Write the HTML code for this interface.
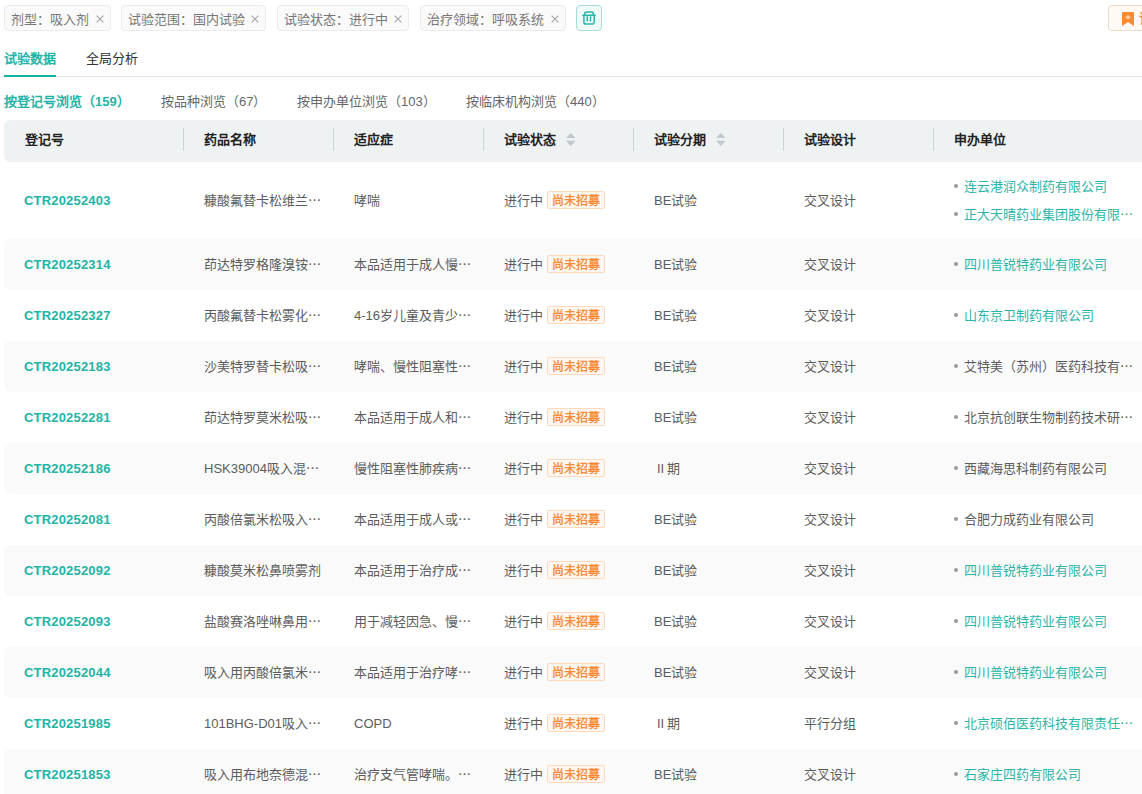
<!DOCTYPE html><html lang="zh-CN"><head><meta charset="utf-8"><style>
*{box-sizing:border-box;margin:0;padding:0}
html,body{width:1142px;height:794px;overflow:hidden;background:#fff}
body{position:relative;font-family:"Liberation Sans",sans-serif;font-size:13px;color:#5c5c5c}
.a{position:absolute;white-space:nowrap}
.tag{position:absolute;white-space:nowrap;top:5px;height:26px;border:1px solid #ebebeb;background:#fafafa;border-radius:4px;color:#777;font-size:13px;line-height:27px;padding-left:6px}
.tag .x{position:absolute}
.trash{position:absolute;left:576px;top:5px;width:26px;height:26px;border:1px solid #a6ddd5;background:#f0faf8;border-radius:4px}
.sub{position:absolute;white-space:nowrap;top:93px;line-height:18px;font-size:13px;color:#666}
.hdr{position:absolute;left:4px;top:120px;width:1160px;height:42px;background:#eef2f3;border-radius:6px 0 0 6px}
.th{position:absolute;white-space:nowrap;top:131px;line-height:18px;font-weight:bold;color:#222;font-size:13px}
.sep{position:absolute;top:128px;width:1px;height:23px;background:#cdd4d7}
.row{position:absolute;left:4px;width:1160px;border-radius:6px 0 0 6px}
.row.g{background:#fafafa}
.td{position:absolute;white-space:nowrap;line-height:18px;font-size:13px;color:#5c5c5c}
.id{font-weight:bold;color:#22b4a5;letter-spacing:0.18px}
.st{position:absolute;white-space:nowrap;font-size:12px;line-height:19px;height:17.5px;overflow:hidden;-webkit-text-stroke:0.3px #f6862a;border:1px solid #ffd9bd;background:#fff8f2;color:#f6862a;padding:0 4px;border-radius:2px}
.dot{position:absolute;width:4px;height:4px;border-radius:2px;background:#9a9a9a}
.teal{color:#2cb5a8}
</style></head><body>
<div class="tag" style="left:4px;width:107px">剂型：吸入剂<svg class="x" width="8" height="8" viewBox="0 0 8 8" style="right:6px;top:9px"><path d="M0.6 0.6L7.4 7.4M7.4 0.6L0.6 7.4" stroke="#a6a6a6" stroke-width="1.1"/></svg></div>
<div class="tag" style="left:121px;width:145px">试验范围：国内试验<svg class="x" width="8" height="8" viewBox="0 0 8 8" style="right:6px;top:9px"><path d="M0.6 0.6L7.4 7.4M7.4 0.6L0.6 7.4" stroke="#a6a6a6" stroke-width="1.1"/></svg></div>
<div class="tag" style="left:277px;width:132px">试验状态：进行中<svg class="x" width="8" height="8" viewBox="0 0 8 8" style="right:6px;top:9px"><path d="M0.6 0.6L7.4 7.4M7.4 0.6L0.6 7.4" stroke="#a6a6a6" stroke-width="1.1"/></svg></div>
<div class="tag" style="left:420px;width:146px">治疗领域：呼吸系统<svg class="x" width="8" height="8" viewBox="0 0 8 8" style="right:6px;top:9px"><path d="M0.6 0.6L7.4 7.4M7.4 0.6L0.6 7.4" stroke="#a6a6a6" stroke-width="1.1"/></svg></div>
<div class="trash"><svg width="26" height="26" viewBox="0 0 26 26" style="position:absolute;left:-1px;top:-1px" fill="none" stroke="#2bb5a7" stroke-width="1.5" stroke-linecap="round" stroke-linejoin="round"><path d="M6.9 10.3H19.1"/><path d="M8.7 10.3V8.9a1.8 1.8 0 0 1 1.8-1.8h5.1a1.8 1.8 0 0 1 1.8 1.8V10.3"/><path d="M7.9 10.6V17a2.1 2.1 0 0 0 2.1 2.1h6.1a2.1 2.1 0 0 0 2.1-2.1V10.6"/><path d="M11.3 11.8V16M14.5 11.8V16"/></svg></div>
<div class="a" style="left:1108px;top:5px;width:80px;height:26px;border:1px solid #efd9c9;background:#fffaf5;border-radius:4px"></div>
<svg class="a" style="left:1122px;top:12px" width="12" height="14" viewBox="0 0 12 14"><path d="M0 1.2Q0 0 1.2 0H10.8Q12 0 12 1.2V14L6 10L0 14Z" fill="#f98a2f"/><path d="M3.6 5.2H8.4M6 3V7.6" stroke="rgba(255,255,255,0.9)" stroke-width="1"/></svg>
<div class="a" style="left:1139px;top:10px;line-height:18px;color:#f98a2f;font-weight:bold">订阅</div>
<div class="a" style="left:4px;top:50px;line-height:18px;font-size:13px;font-weight:bold;color:#26b3a6">试验数据</div>
<div class="a" style="left:86px;top:50px;line-height:18px;font-size:13px;color:#333">全局分析</div>
<div class="a" style="left:0;top:76px;width:1142px;height:1px;background:#e6e8ee"></div>
<div class="a" style="left:4px;top:75px;width:52px;height:2px;background:#14b4a2"></div>
<div class="sub" style="left:4px;font-weight:bold;color:#26b3a6">按登记号浏览（159）</div>
<div class="sub" style="left:161px;">按品种浏览（67）</div>
<div class="sub" style="left:297px;">按申办单位浏览（103）</div>
<div class="sub" style="left:466px;">按临床机构浏览（440）</div>
<div class="hdr"></div>
<div class="th" style="left:24.5px">登记号</div>
<div class="th" style="left:204px">药品名称</div>
<div class="th" style="left:354px">适应症</div>
<div class="th" style="left:504px">试验状态</div>
<div class="th" style="left:654px">试验分期</div>
<div class="th" style="left:804px">试验设计</div>
<div class="th" style="left:954px">申办单位</div>
<div class="sep" style="left:183px"></div>
<div class="sep" style="left:333px"></div>
<div class="sep" style="left:483px"></div>
<div class="sep" style="left:633px"></div>
<div class="sep" style="left:783px"></div>
<div class="sep" style="left:933px"></div>
<svg class="a" style="left:566px;top:132px" width="10" height="15" viewBox="0 0 10 15"><path d="M4.8 0.9L9.6 6.1H0Z" fill="#c3c8ce"/><path d="M4.8 14L9.6 8.8H0Z" fill="#c3c8ce"/></svg>
<svg class="a" style="left:716px;top:132px" width="10" height="15" viewBox="0 0 10 15"><path d="M4.8 0.9L9.6 6.1H0Z" fill="#c3c8ce"/><path d="M4.8 14L9.6 8.8H0Z" fill="#c3c8ce"/></svg>
<div class="row" style="top:162px;height:77px"></div>
<div class="td id" style="left:24px;top:191.5px">CTR20252403</div>
<div class="td" style="left:204px;top:191.5px">糠酸氟替卡松维兰⋯</div>
<div class="td" style="left:354px;top:191.5px">哮喘</div>
<div class="td" style="left:504px;top:191.5px">进行中</div>
<div class="st" style="left:547px;top:191.0px">尚未招募</div>
<div class="td" style="left:654px;top:191.5px">BE试验</div>
<div class="td" style="left:804px;top:191.5px">交叉设计</div>
<div class="dot" style="left:954px;top:183.8px"></div>
<div class="td teal" style="left:964px;top:177.5px">连云港润众制药有限公司</div>
<div class="dot" style="left:954px;top:211.8px"></div>
<div class="td teal" style="left:964px;top:205.5px">正大天晴药业集团股份有限⋯</div>
<div class="row g" style="top:239px;height:51px"></div>
<div class="td id" style="left:24px;top:255.5px">CTR20252314</div>
<div class="td" style="left:204px;top:255.5px">茚达特罗格隆溴铵⋯</div>
<div class="td" style="left:354px;top:255.5px">本品适用于成人慢⋯</div>
<div class="td" style="left:504px;top:255.5px">进行中</div>
<div class="st" style="left:547px;top:255.0px">尚未招募</div>
<div class="td" style="left:654px;top:255.5px">BE试验</div>
<div class="td" style="left:804px;top:255.5px">交叉设计</div>
<div class="dot" style="left:954px;top:261.8px"></div>
<div class="td teal" style="left:964px;top:255.5px">四川普锐特药业有限公司</div>
<div class="row" style="top:290px;height:51px"></div>
<div class="td id" style="left:24px;top:306.5px">CTR20252327</div>
<div class="td" style="left:204px;top:306.5px">丙酸氟替卡松雾化⋯</div>
<div class="td" style="left:354px;top:306.5px">4-16岁儿童及青少⋯</div>
<div class="td" style="left:504px;top:306.5px">进行中</div>
<div class="st" style="left:547px;top:306.0px">尚未招募</div>
<div class="td" style="left:654px;top:306.5px">BE试验</div>
<div class="td" style="left:804px;top:306.5px">交叉设计</div>
<div class="dot" style="left:954px;top:312.8px"></div>
<div class="td teal" style="left:964px;top:306.5px">山东京卫制药有限公司</div>
<div class="row g" style="top:341px;height:51px"></div>
<div class="td id" style="left:24px;top:357.5px">CTR20252183</div>
<div class="td" style="left:204px;top:357.5px">沙美特罗替卡松吸⋯</div>
<div class="td" style="left:354px;top:357.5px">哮喘、慢性阻塞性⋯</div>
<div class="td" style="left:504px;top:357.5px">进行中</div>
<div class="st" style="left:547px;top:357.0px">尚未招募</div>
<div class="td" style="left:654px;top:357.5px">BE试验</div>
<div class="td" style="left:804px;top:357.5px">交叉设计</div>
<div class="dot" style="left:954px;top:363.8px"></div>
<div class="td" style="left:964px;top:357.5px">艾特美（苏州）医药科技有⋯</div>
<div class="row" style="top:392px;height:51px"></div>
<div class="td id" style="left:24px;top:408.5px">CTR20252281</div>
<div class="td" style="left:204px;top:408.5px">茚达特罗莫米松吸⋯</div>
<div class="td" style="left:354px;top:408.5px">本品适用于成人和⋯</div>
<div class="td" style="left:504px;top:408.5px">进行中</div>
<div class="st" style="left:547px;top:408.0px">尚未招募</div>
<div class="td" style="left:654px;top:408.5px">BE试验</div>
<div class="td" style="left:804px;top:408.5px">交叉设计</div>
<div class="dot" style="left:954px;top:414.8px"></div>
<div class="td" style="left:964px;top:408.5px">北京抗创联生物制药技术研⋯</div>
<div class="row g" style="top:443px;height:51px"></div>
<div class="td id" style="left:24px;top:459.5px">CTR20252186</div>
<div class="td" style="left:204px;top:459.5px">HSK39004吸入混⋯</div>
<div class="td" style="left:354px;top:459.5px">慢性阻塞性肺疾病⋯</div>
<div class="td" style="left:504px;top:459.5px">进行中</div>
<div class="st" style="left:547px;top:459.0px">尚未招募</div>
<div class="td" style="left:654px;top:459.5px"><span style="margin-left:3px;margin-right:-1px">II</span> 期</div>
<div class="td" style="left:804px;top:459.5px">交叉设计</div>
<div class="dot" style="left:954px;top:465.8px"></div>
<div class="td" style="left:964px;top:459.5px">西藏海思科制药有限公司</div>
<div class="row" style="top:494px;height:51px"></div>
<div class="td id" style="left:24px;top:510.5px">CTR20252081</div>
<div class="td" style="left:204px;top:510.5px">丙酸倍氯米松吸入⋯</div>
<div class="td" style="left:354px;top:510.5px">本品适用于成人或⋯</div>
<div class="td" style="left:504px;top:510.5px">进行中</div>
<div class="st" style="left:547px;top:510.0px">尚未招募</div>
<div class="td" style="left:654px;top:510.5px">BE试验</div>
<div class="td" style="left:804px;top:510.5px">交叉设计</div>
<div class="dot" style="left:954px;top:516.8px"></div>
<div class="td" style="left:964px;top:510.5px">合肥力成药业有限公司</div>
<div class="row g" style="top:545px;height:51px"></div>
<div class="td id" style="left:24px;top:561.5px">CTR20252092</div>
<div class="td" style="left:204px;top:561.5px">糠酸莫米松鼻喷雾剂</div>
<div class="td" style="left:354px;top:561.5px">本品适用于治疗成⋯</div>
<div class="td" style="left:504px;top:561.5px">进行中</div>
<div class="st" style="left:547px;top:561.0px">尚未招募</div>
<div class="td" style="left:654px;top:561.5px">BE试验</div>
<div class="td" style="left:804px;top:561.5px">交叉设计</div>
<div class="dot" style="left:954px;top:567.8px"></div>
<div class="td teal" style="left:964px;top:561.5px">四川普锐特药业有限公司</div>
<div class="row" style="top:596px;height:51px"></div>
<div class="td id" style="left:24px;top:612.5px">CTR20252093</div>
<div class="td" style="left:204px;top:612.5px">盐酸赛洛唑啉鼻用⋯</div>
<div class="td" style="left:354px;top:612.5px">用于减轻因急、慢⋯</div>
<div class="td" style="left:504px;top:612.5px">进行中</div>
<div class="st" style="left:547px;top:612.0px">尚未招募</div>
<div class="td" style="left:654px;top:612.5px">BE试验</div>
<div class="td" style="left:804px;top:612.5px">交叉设计</div>
<div class="dot" style="left:954px;top:618.8px"></div>
<div class="td teal" style="left:964px;top:612.5px">四川普锐特药业有限公司</div>
<div class="row g" style="top:647px;height:51px"></div>
<div class="td id" style="left:24px;top:663.5px">CTR20252044</div>
<div class="td" style="left:204px;top:663.5px">吸入用丙酸倍氯米⋯</div>
<div class="td" style="left:354px;top:663.5px">本品适用于治疗哮⋯</div>
<div class="td" style="left:504px;top:663.5px">进行中</div>
<div class="st" style="left:547px;top:663.0px">尚未招募</div>
<div class="td" style="left:654px;top:663.5px">BE试验</div>
<div class="td" style="left:804px;top:663.5px">交叉设计</div>
<div class="dot" style="left:954px;top:669.8px"></div>
<div class="td teal" style="left:964px;top:663.5px">四川普锐特药业有限公司</div>
<div class="row" style="top:698px;height:51px"></div>
<div class="td id" style="left:24px;top:714.5px">CTR20251985</div>
<div class="td" style="left:204px;top:714.5px">101BHG-D01吸入⋯</div>
<div class="td" style="left:354px;top:714.5px">COPD</div>
<div class="td" style="left:504px;top:714.5px">进行中</div>
<div class="st" style="left:547px;top:714.0px">尚未招募</div>
<div class="td" style="left:654px;top:714.5px"><span style="margin-left:3px;margin-right:-1px">II</span> 期</div>
<div class="td" style="left:804px;top:714.5px">平行分组</div>
<div class="dot" style="left:954px;top:720.8px"></div>
<div class="td teal" style="left:964px;top:714.5px">北京硕佰医药科技有限责任⋯</div>
<div class="row g" style="top:749px;height:51px"></div>
<div class="td id" style="left:24px;top:765.5px">CTR20251853</div>
<div class="td" style="left:204px;top:765.5px">吸入用布地奈德混⋯</div>
<div class="td" style="left:354px;top:765.5px">治疗支气管哮喘。⋯</div>
<div class="td" style="left:504px;top:765.5px">进行中</div>
<div class="st" style="left:547px;top:765.0px">尚未招募</div>
<div class="td" style="left:654px;top:765.5px">BE试验</div>
<div class="td" style="left:804px;top:765.5px">交叉设计</div>
<div class="dot" style="left:954px;top:771.8px"></div>
<div class="td teal" style="left:964px;top:765.5px">石家庄四药有限公司</div>
</body></html>
